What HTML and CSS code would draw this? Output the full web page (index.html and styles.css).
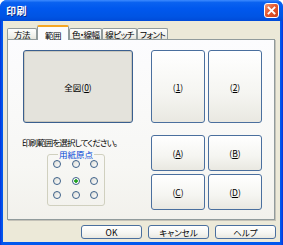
FILE: index.html
```html
<!DOCTYPE html>
<html lang="ja">
<head>
    <meta charset="UTF-8">
    <title>印刷</title>
    <link rel="stylesheet" href="styles.css">
</head>
<body>
    <div class="window">
        <div class="title-bar">
            <span class="title">印刷</span>
            <span class="close-button">
                <svg width="13" height="13" viewBox="0 0 13 13">
                    <path d="M3.5 3.5 L9.5 9.5 M9.5 3.5 L3.5 9.5" stroke="#fff" stroke-width="1.8" stroke-linecap="square"/>
                </svg>
            </span>
        </div>

        <div class="client">
            <!-- Tabs -->
            <div class="tabs">
                <span class="tab">方法</span>
                <span class="tab active">範囲</span>
                <span class="tab">色・線幅</span>
                <span class="tab">線ピッチ</span>
                <span class="tab">フォント</span>
            </div>

            <div class="panel">
                <button class="btn big">全図(<u>0</u>)</button>

                <div class="pair">
                    <button class="btn">(<u>1</u>)</button>
                    <button class="btn">(<u>2</u>)</button>
                </div>

                <div class="left">
                    <p class="hint">印刷範囲を選択してください。</p>
                    <fieldset class="origin">
                        <legend>用紙原点</legend>
                        <div class="radios">
                            <span class="radio"></span>
                            <span class="radio"></span>
                            <span class="radio"></span>
                            <span class="radio"></span>
                            <span class="radio checked"></span>
                            <span class="radio"></span>
                            <span class="radio"></span>
                            <span class="radio"></span>
                            <span class="radio"></span>
                        </div>
                    </fieldset>
                </div>

                <div class="quad">
                    <button class="btn">(<u>A</u>)</button>
                    <button class="btn">(<u>B</u>)</button>
                    <button class="btn">(<u>C</u>)</button>
                    <button class="btn">(<u>D</u>)</button>
                </div>
            </div>

            <!-- Dialog buttons -->
            <div class="actions">
                <button class="btn">OK</button>
                <button class="btn">キャンセル</button>
                <button class="btn">ヘルプ</button>
            </div>
        </div>
    </div>
</body>
</html>
```

FILE: styles.css
```css
/* Main Styles */
body {
    margin: 0;
    background-color: #ffffff;
    font-family: "Noto Sans CJK JP", sans-serif;
    font-size: 8.5px;
    line-height: 10px;
    font-feature-settings: "palt";
    color: #000000;
}
.window {
    width: 283px;
    height: 245px;
    display: flex;
    flex-direction: column;
    background: linear-gradient(to right, #0831d9, #0058ee 2px, #0058ee 281px, #0831d9);
    border-radius: 7px 7px 0 0;
}
.title-bar {
    height: 21px;
    display: flex;
    align-items: center;
    justify-content: space-between;
    padding: 0 4px 0 6px;
    border-radius: 7px 7px 0 0;
    background: linear-gradient(#3d8bff 0%, #0a62f0 12%, #0058ee 40%, #0054e3 80%, #004ad8 100%);
}
.title {
    color: #ffffff;
    font-size: 10px;
    font-weight: bold;
    letter-spacing: 0.5px;
    text-shadow: 1px 1px 0 #0a2a8a;
}
.close-button {
    width: 13px;
    height: 13px;
    display: flex;
    border: 1px solid #ffffff;
    border-radius: 3px;
    background: linear-gradient(135deg, #f29a78, #e5582e 45%, #c8401c);
}
.client {
    flex: 1;
    margin: 0 3px 3px;
    padding-top: 4px;
    background-color: #ece9d8;
}

/* Tabs */
.tabs {
    display: flex;
    align-items: flex-end;
    height: 14px;
    margin-left: 4px;
}
.tab {
    box-sizing: border-box;
    height: 11px;
    min-width: 30px;
    padding: 0 2px;
    line-height: 10px;
    letter-spacing: -0.6px;
    text-align: center;
    border: 1px solid #919b9c;
    border-bottom: none;
    border-radius: 2px 2px 0 0;
    background: linear-gradient(#ffffff, #f0f0ea 70%, #e6e5dc);
}
.tab.active {
    position: relative;
    z-index: 1;
    height: 15px;
    min-width: 32px;
    margin-bottom: -1px;
    padding-top: 3px;
    border-top: 2px solid #f5a623;
    background: #fcfcfe;
}

.panel {
    box-sizing: border-box;
    width: 268px;
    height: 181px;
    margin-left: 4px;
    padding: 10px 12px 0 15px;
    display: grid;
    grid-template-columns: 110px 111px;
    grid-template-rows: 73px auto;
    column-gap: 18px;
    row-gap: 12px;
    border: 1px solid #919b9c;
    box-shadow: 1px 1px 0 #c4c2b8;
    background: linear-gradient(#fcfcfe, #f7f7f4 70%, #f2f1ec);
}

/* Buttons */
.btn {
    margin: 0;
    padding: 0;
    font-family: inherit;
    font-size: inherit;
    font-feature-settings: "palt";
    color: #000000;
    border: 1px solid #4a6f9e;
    border-radius: 3px;
    background: linear-gradient(#ffffff, #f5f5f1 60%, #e9e8e1);
}
.btn.big {
    border-color: #3a5f8f;
    box-shadow: inset 0 0 0 1px #c9c7bd;
    background: #e4e3dc;
}
.pair {
    display: grid;
    grid-template-columns: 1fr 1fr;
    column-gap: 3px;
}
.quad {
    display: grid;
    grid-template-columns: 1fr 1fr;
    grid-template-rows: 36px 36px;
    gap: 3px;
}

.hint {
    margin: 2px 0 0 -1px;
    letter-spacing: -0.9px;
}
.origin {
    box-sizing: border-box;
    width: 58px;
    margin: 2px 0 0 24px;
    padding: 1px 5px 6px 5px;
    border: 1px solid #d0d0bf;
    border-radius: 3px;
}
.origin legend {
    margin: 0 auto;
    padding: 0 1px;
    color: #0046d5;
}
.radios {
    display: grid;
    grid-template-columns: repeat(3, 8px);
    grid-template-rows: 17px 14px 8px;
    column-gap: 10.5px;
}
.radio {
    box-sizing: border-box;
    width: 8px;
    height: 8px;
    border: 1px solid #3d6189;
    border-radius: 50%;
    background: linear-gradient(135deg, #dcdcd5, #ffffff);
}
.radio.checked {
    background: radial-gradient(circle, #21a121 0, #21a121 1.5px, #ffffff 2px);
}

.actions {
    display: flex;
    justify-content: flex-end;
    gap: 6px;
    margin-top: 5px;
    padding-right: 4px;
}
.actions .btn {
    width: 61px;
    height: 14px;
}
```
